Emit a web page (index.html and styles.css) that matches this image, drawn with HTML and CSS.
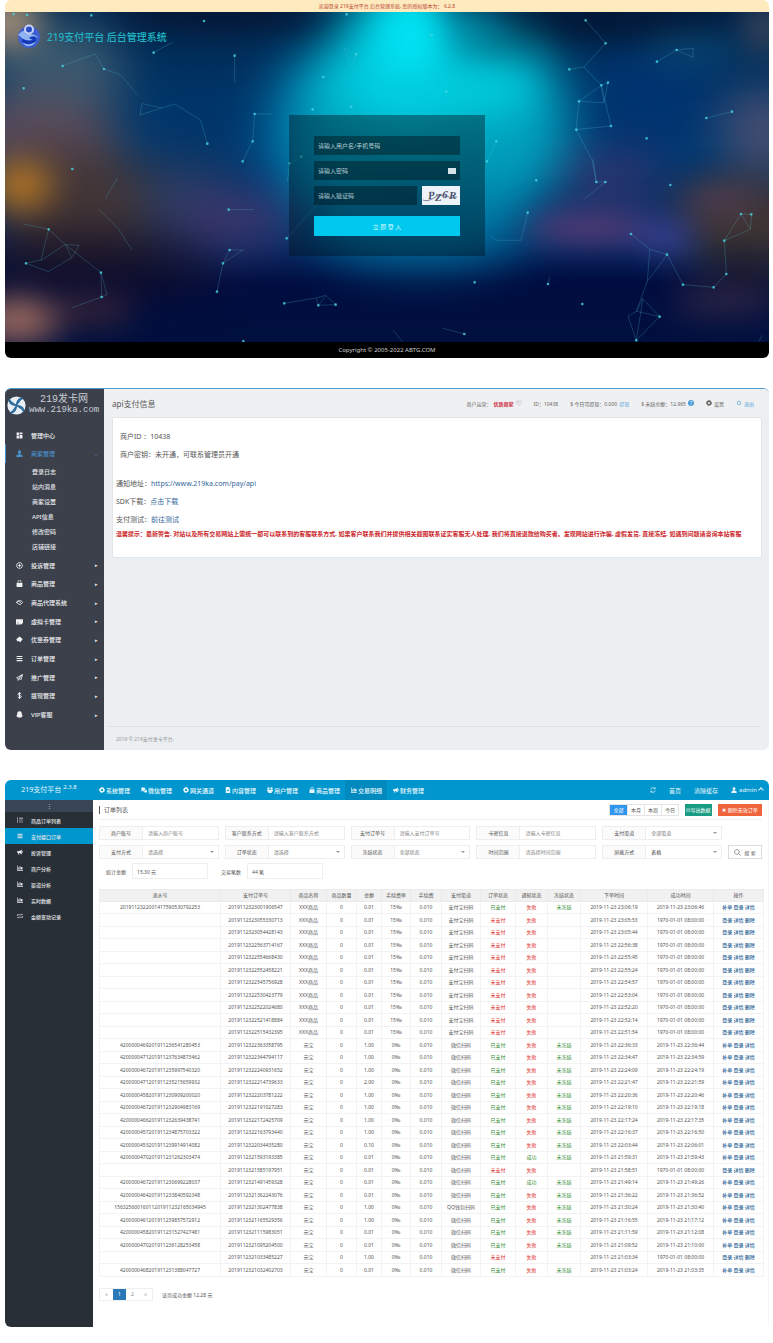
FILE: index.html
```html
<!DOCTYPE html>
<html lang="zh-CN">
<head>
<meta charset="utf-8">
<title>219支付平台</title>
<link rel="stylesheet" href="styles.css">
</head>
<body>
<svg class="sprite" aria-hidden="true">
  <symbol id="grid" viewBox="0 0 12 12"><path d="M1 1h4v5H1zM6 1h5v3H6zM1 7h4v4H1zM6 5h5v6H6z"/></symbol>
  <symbol id="user" viewBox="0 0 12 12"><circle cx="6" cy="3.4" r="2.8"/><path d="M4.7 5h2.6v2.2l4 1.8V12H.7V9l4-1.8z"/></symbol>
  <symbol id="globe" viewBox="0 0 12 12"><path fill="none" stroke="currentColor" stroke-width="1.4" d="M6 1a5 5 0 1 0 .01 0M3 6h6M6 3v6"/></symbol>
  <symbol id="bag" viewBox="0 0 12 12"><path d="M1 5h10v7H1z"/><path fill="none" stroke="currentColor" stroke-width="1.4" d="M3.5 6V3a2.5 2.5 0 0 1 5 0v3"/></symbol>
  <symbol id="eye" viewBox="0 0 12 12"><path fill="none" stroke="currentColor" stroke-width="1.4" d="M.7 6 3 3h6l2.3 3L7 10 .7 6l4-2 4 3"/></symbol>
  <symbol id="card" viewBox="0 0 12 12"><path d="M0 2h12v6L9 11H0zM2 8v1h3V8z" fill-rule="evenodd"/></symbol>
  <symbol id="tag" viewBox="0 0 12 12"><path d="m6 1 5.500 4-4 5.500-3-2-2 1-2-4z"/></symbol>
  <symbol id="list" viewBox="0 0 12 12"><path d="M1 1.500h10v2H1zM1 5h10v2H1zM1 8.500h10v2H1z"/></symbol>
  <symbol id="plane" viewBox="0 0 12 12"><path fill="none" stroke="currentColor" stroke-width="1.300" d="M11 1 1 6.500l2.500 1.300L11 1 9 9.500 5.500 8.300M3.500 7.800V11l2-2.500L11 1"/></symbol>
  <symbol id="dollar" viewBox="0 0 12 12"><path fill="none" stroke="currentColor" stroke-width="1.700" d="M9 3.500C8 2 3.500 1.500 3.500 4S9 5.500 9 8 4 10.500 3 8.500M6 0v12"/></symbol>
  <symbol id="bell" viewBox="0 0 12 12"><path d="M6 .5c3 0 4 2 4 5l1.500 3.500-1.500.5c0 1.500-2 2-4 2s-4-.5-4-2L.5 9 2 5.500c0-3 1-5 4-5"/></symbol>
  <symbol id="gear" viewBox="0 0 12 12"><path fill-rule="evenodd" d="M5 0h2l.4 1.600 1.500-.8L10.300 2.400l-.8 1.300L12 5v2l-1.800.4.8 1.500-1.500 1.500-1.500-.8L7 12H5l-.5-1.800-1.500.7L1.500 9.500l.7-1.500L0 7V5l1.800-.5L1 3l1.500-1.500 1.600.7zM6 3.800a2.200 2.200 0 1 0 .01 0"/></symbol>
  <symbol id="chat" viewBox="0 0 12 12"><ellipse cx="4.500" cy="4.200" rx="4.300" ry="3.600"/><path d="M1 10V6h3zM8.500 5.500c2 0 3.500 1 3.500 2.800 0 1-.5 1.700-1.200 2.200V12l-1.600-1C6 11.500 4.800 10 4.800 8.700 7 8.700 8.500 7.500 8.500 5.500"/></symbol>
  <symbol id="doc" viewBox="0 0 12 12"><path fill-rule="evenodd" d="M1.500 0H8l2.500 3v9h-9zM3.500 6l2 3L9 5.500 8 4.500 5.600 7 4.500 5.200z"/></symbol>
  <symbol id="users" viewBox="0 0 12 12"><circle cx="3" cy="3" r="2.300"/><circle cx="9" cy="3" r="2.300"/><path d="M0 5.500h12v3L9.500 9v3h-7V9L0 8.500z"/></symbol>
  <symbol id="chart" viewBox="0 0 12 12"><path d="M0 1h1.300v9H12v1.300H0zM2.500 5h2v4h-2zM5.200 2.500h2V9h-2zM8 4h3v5H8z"/></symbol>
  <symbol id="horn" viewBox="0 0 12 12"><path d="M9.500 1v10L5 8H4l.8 3.500H3L2.200 8H.5V4H5zM10.500 4l1.500 1v2l-1.500 1z"/></symbol>
  <symbol id="olist" viewBox="0 0 12 12"><path d="M4 1.500h8v1.300H4zM4 5.400h8v1.300H4zM4 9.300h8v1.300H4zM.5 1h1.500v2.600H.5zM.5 4.800H2v2.600H.5zM.5 8.600H2v2.600H.5z"/></symbol>
  <symbol id="swap" viewBox="0 0 12 12"><path fill="none" stroke="currentColor" stroke-width="1.300" d="M0 3.500h11L9 1.500M12 8.500H1l2 2M1 3.500v2M11 6.500v2"/></symbol>
  <symbol id="refresh" viewBox="0 0 12 12"><path fill="none" stroke="currentColor" stroke-width="1.500" d="M1.500 5A4.500 4.500 0 0 1 9.500 3M10.500 7a4.500 4.500 0 0 1-8 2M10.300.5v3H7M1.700 11.500v-3H5"/></symbol>
  <symbol id="glass" viewBox="0 0 12 12"><path fill="none" stroke="currentColor" d="M5 1a4 4 0 1 0 .01 0M8 8l3.500 3.500"/></symbol>
  <symbol id="cup" viewBox="0 0 12 12"><path fill="none" stroke="currentColor" d="M1 2h10v4L8 10H4L1 6zM4 2v3h4"/></symbol>
  <symbol id="ring" viewBox="0 0 12 12"><circle cx="6" cy="6" r="3.500" fill="none" stroke="currentColor" stroke-width="1.500"/></symbol>
</svg>

<main class="shots">
<section class="shot login">
  <p class="notice">欢迎登录 219支付平台 后台管理系统, 您的授权版本为： 6.2.8</p>
  <div class="stage">
    <svg class="scene" viewBox="5 12 764 330" preserveAspectRatio="none" aria-hidden="true">
      <defs>
        <filter id="b1" x="-100%" y="-100%" width="300%" height="300%" color-interpolation-filters="sRGB"><feGaussianBlur stdDeviation="16"/></filter>
        <filter id="b2" x="-100%" y="-100%" width="300%" height="300%" color-interpolation-filters="sRGB"><feGaussianBlur stdDeviation="24"/></filter>
        <linearGradient id="sky" x1="0" y1="0" x2="0" y2="1"><stop offset="0" stop-color="#02284f"/><stop offset=".4" stop-color="#003c74"/><stop offset=".7" stop-color="#022660"/><stop offset=".82" stop-color="#010d40"/><stop offset="1" stop-color="#00103e"/></linearGradient>
      </defs>
      <rect x="5" y="12" width="764" height="330" fill="url(#sky)"/>
      <g filter="url(#b2)">
        <ellipse cx="60" cy="70" rx="65" ry="50" fill="#3a5a70"/>
        <ellipse cx="35" cy="135" rx="85" ry="40" fill="#5a4a58"/>
        <ellipse cx="80" cy="200" rx="95" ry="50" fill="#433636"/>
        <ellipse cx="90" cy="265" rx="130" ry="28" fill="#120e26"/>
        <ellipse cx="185" cy="200" rx="45" ry="40" fill="#2a3c60"/>
        <ellipse cx="235" cy="220" rx="60" ry="28" fill="#41386e"/>
        <ellipse cx="200" cy="130" rx="55" ry="30" fill="#003468"/>
        <ellipse cx="320" cy="130" rx="55" ry="80" fill="#006aa0"/>
        <ellipse cx="430" cy="125" rx="140" ry="110" fill="#009cba"/>
        <ellipse cx="430" cy="80" rx="125" ry="55" fill="#00bcd0"/>
        <ellipse cx="400" cy="55" rx="60" ry="75" fill="#00d0e2"/>
        <ellipse cx="420" cy="225" rx="110" ry="40" fill="#0074a0"/>
        <ellipse cx="650" cy="100" rx="65" ry="60" fill="#003470"/>
        <ellipse cx="765" cy="130" rx="45" ry="40" fill="#4a4f70"/>
        <ellipse cx="750" cy="225" rx="75" ry="45" fill="#40342f"/>
        <ellipse cx="610" cy="178" rx="55" ry="20" fill="#40356e"/>
      </g>
      <g filter="url(#b1)">
        <ellipse cx="8" cy="22" rx="34" ry="28" fill="#a08c76"/>
        <ellipse cx="215" cy="12" rx="100" ry="16" fill="#061330"/>
        <ellipse cx="500" cy="42" rx="50" ry="14" fill="#007a92"/>
        <ellipse cx="410" cy="40" rx="24" ry="50" fill="#00e4f4"/>
        <ellipse cx="450" cy="88" rx="75" ry="18" fill="#00cadb"/>
        <ellipse cx="620" cy="18" rx="120" ry="20" fill="#021634"/>
        <ellipse cx="22" cy="185" rx="30" ry="24" fill="#b07424"/>
        <ellipse cx="18" cy="320" rx="42" ry="22" fill="#a06c5e"/>
        <ellipse cx="90" cy="310" rx="45" ry="12" fill="#442a38"/>
        <ellipse cx="590" cy="228" rx="65" ry="14" fill="#68407a"/>
        <ellipse cx="665" cy="237" rx="28" ry="15" fill="#40449c"/>
        <ellipse cx="720" cy="200" rx="40" ry="14" fill="#553e50"/>
        <ellipse cx="745" cy="265" rx="35" ry="8" fill="#15101e"/>
        <ellipse cx="725" cy="302" rx="55" ry="10" fill="#403048"/>
        <ellipse cx="764" cy="28" rx="18" ry="24" fill="#454a5a"/>
        <ellipse cx="690" cy="48" rx="45" ry="14" fill="#0a4a78"/>
      </g>
      <g transform="scale(.3333)">
        <path class="web" d="M461 157l56-30M704 167v80M188 197l98-35 26 45 50 17 50 60M1030 142l39 21-14 35zM420 345l6-34 60 13 38-12 78 48 20 71M420 345l66-21M764 342h52M764 342l-6 82-30 60M869 490l35-20M869 490l-7 55M353 533l-38 65M295 626l60 60 40 63M70 672l76 16-23 92-45 10 67 25 70-42 23-37-44-2-71 48M146 688l50 46 19 38M196 734l107 84M303 818l2 73 16-7zM305 891l-90 33M686 629h75M669 790l20-40h40l-60 40-18 85M853 910l96-16 28-8 30 28-52 2-6-22M955 916l22-28M860 715l97-108"/>
        <path class="dot" d="M41 42h0M81 45h0M274 46h0M612 63h0M188 198h0M71 265h0M461 158h0M312 207h0M704 167h0M970 231h0M1069 163h0M1040 43h0M1054 320h0M938 328h0M764 342h0M758 424h0M728 484h0M622 431h0M217 507h0M869 490h0M904 470h0M686 629h0M860 715h0M146 688h0M78 790h0M303 818h0M305 891h0M689 750h0M669 790h0M651 875h0M853 910h0M955 916h0M1007 914h0M730 1024h0"/>
      </g>
      <g transform="translate(383) scale(.3333)">
        <path class="web" d="M608 61l60 69-65 71-44 7M603 201l52 55 20-8-12 60-75-4-9 85 48 90 13 67h28l-63 50M655 256l29 122M588 304l67-48 8 52M640 546l-10-68M580 389l104-11M822 185l59-35 50-5-2 27-48-22M970 354l77-19M340 424l-28 60M434 638l-20 83h-75l-15-13M500 830l-5 22M744 702l57 46 52 16-60 80-33 90-25 15 25 72 70-71-51-54-18 38 70 16M801 748l-8 96M853 764l47 90 92 8 38-40-6-100 78-34 4-44-32-2 28 46M1074 642l-50 80M780 896l-20 125M180 985l64 17M30 990l28 35M1127 1025l12-20"/>
        <path class="dot" d="M608 61h0M668 130h0M559 208h0M655 256h0M675 248h0M588 304h0M580 389h0M684 378h0M881 150h0M822 185h0M791 415h0M970 354h0M1047 335h0M862 555h0M640 546h0M667 546h0M340 424h0M312 484h0M460 541h0M434 638h0M190 275h0M146 105h0M744 702h0M900 854h0M1030 822h0M992 862h0M1024 722h0M1074 642h0M1105 643h0M760 1021h0M830 950h0M275 847h0M244 1002h0M598 912h0M495 852h0M852 764h0"/>
      </g>
    </svg>
    <header class="brand">
      <svg class="ball" viewBox="0 0 24 24" aria-hidden="true"><circle cx="12" cy="13" r="11" fill="#3f5fd0"/><circle cx="12" cy="16" r="7" fill="#1237b4"/><path d="M1 11c3-4 6-5 10-4l-3 3c5-1 10 0 14 4-4-2-8-2-10 0l4 2c-5 1-10 0-12-3M5 18c4 3 10 3 14-1-2 6-10 8-14 1" fill="#8fb4f4"/><circle cx="12" cy="5.500" r="4" fill="#2c4ec4" stroke="#c8d4f8" stroke-width="2"/></svg>
      <h1>219支付平台 后台管理系统</h1>
    </header>
    <form class="panel">
      <input class="field" type="text" aria-label="用户名" placeholder="请输入用户名/手机号码">
      <div class="secret"><input class="field" type="password" aria-label="密码" placeholder="请输入密码"><i class="key"></i></div>
      <div class="verify">
        <input class="field" type="text" aria-label="验证码" placeholder="请输入验证码">
        <svg class="captcha" viewBox="0 0 38 19" role="img" aria-label="验证码图片"><rect width="38" height="19" fill="#eef3fa"/><g class="scrawl"><text x="6" y="13" transform="rotate(-6 8 10)">P</text><text x="13" y="15">Z</text><text x="20" y="12" transform="rotate(8 22 10)">6</text><text x="27" y="13">R</text></g><path d="M1 14c5 2 9-1 14-4s10 3 20 1" fill="none" stroke="#59607c" stroke-width=".8"/></svg>
      </div>
      <button class="enter" type="button">立 即 登 入</button>
    </form>
  </div>
  <footer class="legal">Copyright © 2005-2022 ABTG.COM</footer>
</section>

<section class="shot merchant">
  <aside class="mside">
    <div class="mlogo">
      <svg viewBox="0 0 24 24" aria-hidden="true"><circle cx="12" cy="12" r="11.500" fill="#e8eef4"/><path d="M12 12C5 12 2 8 3 4c1 4 5 5 9 8C12 5 16 2 20 3c-4 1-5 5-8 9 7 0 10 4 9 8-1-4-5-5-9-8 0 7-4 10-8 9 4-1 5-5 8-9" fill="#2d6d9e" stroke="#2d6d9e" stroke-width="1.500"/></svg>
      <div><b>219发卡网</b><span>www.219ka.com</span></div>
    </div>
    <nav class="mnav">
      <a href="#"><svg><use href="#grid"/></svg>管理中心</a>
      <a href="#" class="on"><svg><use href="#user"/></svg>商家管理<i>⌄</i></a>
      <div class="sub"><a href="#">登录日志</a><a href="#">站内消息</a><a href="#">商家设置</a><a href="#">API信息</a><a href="#">修改密码</a><a href="#">店铺链接</a></div>
      <a href="#"><svg><use href="#globe"/></svg>投诉管理<i>▸</i></a>
      <a href="#"><svg><use href="#bag"/></svg>商品管理<i>▸</i></a>
      <a href="#"><svg><use href="#eye"/></svg>商品代理系统<i>▸</i></a>
      <a href="#"><svg><use href="#card"/></svg>虚拟卡管理<i>▸</i></a>
      <a href="#"><svg><use href="#tag"/></svg>优惠券管理<i>▸</i></a>
      <a href="#"><svg><use href="#list"/></svg>订单管理<i>▸</i></a>
      <a href="#"><svg><use href="#plane"/></svg>推广管理<i>▸</i></a>
      <a href="#"><svg><use href="#dollar"/></svg>提现管理<i>▸</i></a>
      <a href="#"><svg><use href="#bell"/></svg>VIP客服<i>▸</i></a>
    </nav>
  </aside>
  <div class="mmain">
    <header class="mtop">
      <h2>api支付信息</h2>
      <div class="facts">
        <span>商户运营： <b>优质商家</b> <svg class="pale"><use href="#cup"/></svg></span>
        <span>ID：10438</span>
        <span>$ 今日可提现：0.000 <a href="#">提现</a></span>
        <span>$ 未结余额：12.965<i class="tip">?</i></span>
        <span><svg><use href="#gear"/></svg> 设置</span>
        <a href="#"><svg><use href="#ring"/></svg> 退出</a>
      </div>
    </header>
    <article class="mcard">
      <p class="in">商户ID ：10438</p>
      <p class="in last">商户密钥：未开通，可联系管理员开通</p>
      <p>通知地址：<a href="#">https://www.219ka.com/pay/api</a></p>
      <p>SDK下载：<a href="#">点击下载</a></p>
      <p>支付测试：<a href="#">前往测试</a></p>
      <p class="warn">温馨提示：最新警告, 对站以及所有交易网站上需统一都可以联系到的客服联系方式, 如果客户联系我们并提供相关截图联系证实客服无人处理, 我们将直接退款给购买者。发现网站进行诈骗, 虚假发货, 直接冻结, 如遇到问题请咨询本站客服</p>
    </article>
    <footer class="mfoot">2019 © 219支付发卡平台.</footer>
  </div>
</section>

<section class="shot orders">
  <header class="otop">
    <strong>219支付平台 <sup>2.3.8</sup></strong>
    <nav>
      <a href="#"><svg><use href="#gear"/></svg>系统管理</a>
      <a href="#"><svg><use href="#chat"/></svg>微信管理</a>
      <a href="#"><svg><use href="#gear"/></svg>网关通道</a>
      <a href="#"><svg><use href="#doc"/></svg>内容管理</a>
      <a href="#"><svg><use href="#users"/></svg>用户管理</a>
      <a href="#"><svg><use href="#bag"/></svg>商品管理</a>
      <a href="#" class="on"><svg><use href="#chart"/></svg>交易明细</a>
      <a href="#"><svg><use href="#horn"/></svg>财务管理</a>
    </nav>
    <div class="acct">
      <svg><use href="#refresh"/></svg>
      <a href="#">首页</a><a href="#">清除缓存</a>
      <span><svg><use href="#user"/></svg>admin <i class="caret"></i></span>
    </div>
  </header>
  <div class="obody">
    <aside class="oside">
      <div class="fold">⋮</div>
      <a href="#"><svg><use href="#olist"/></svg>商品订单列表</a>
      <a href="#" class="on"><svg><use href="#list"/></svg>支付接口订单</a>
      <a href="#"><svg><use href="#horn"/></svg>投诉管理</a>
      <a href="#"><svg><use href="#chart"/></svg>商户分析</a>
      <a href="#"><svg><use href="#chart"/></svg>渠道分析</a>
      <a href="#"><svg><use href="#chart"/></svg>实时数据</a>
      <a href="#"><svg><use href="#swap"/></svg>金额变动记录</a>
    </aside>
    <div class="omain">
      <div class="bar">
        <h2>订单列表</h2>
        <div class="range"><button class="on">全部</button><button>本月</button><button>本周</button><button>今日</button></div>
        <button class="green">⊡导出数据</button>
        <button class="red">✖ 删除无效订单</button>
      </div>
      <form class="filters">
        <label class="f"><span>商户账号</span><input placeholder="请输入商户账号"></label>
        <label class="f"><span>客户联系方式</span><input placeholder="请输入客户联系方式"></label>
        <label class="f"><span>支付订单号</span><input placeholder="请输入支付订单号"></label>
        <label class="f"><span>卡密信息</span><input placeholder="请输入卡密信息"></label>
        <label class="f s"><span>支付渠道</span><select><option>全部渠道</option></select></label>
        <span></span>
        <label class="f s"><span>支付方式</span><select><option>请选择</option></select></label>
        <label class="f s"><span>订单状态</span><select><option>请选择</option></select></label>
        <label class="f s"><span>冻结状态</span><select><option>全部状态</option></select></label>
        <label class="f"><span>时间范围</span><input placeholder="请选择时间范围"></label>
        <label class="f s dark"><span>屏蔽方式</span><select><option>表格</option></select></label>
        <button class="find" type="button"><svg><use href="#glass"/></svg>搜 索</button>
      </form>
      <div class="totals">
        <label>统计金额<input value="15.30 元" readonly></label>
        <label>交易笔数<input value="44 笔" readonly></label>
      </div>
      <table class="grid">
        <colgroup><col class="w121"><col class="w70"><col class="w36"><col class="w30"><col class="w25"><col class="w29"><col class="w31"><col class="w39"><col class="w35"><col class="w32"><col class="w33"><col class="w67"><col class="w66"><col class="w50"></colgroup>
        <thead><tr><th>流水号</th><th>支付订单号</th><th>商品名称</th><th>商品数量</th><th>金额</th><th>手续费率</th><th>手续费</th><th>支付渠道</th><th>订单状态</th><th>通知状态</th><th>冻结状态</th><th>下单时间</th><th>成功时间</th><th>操作</th></tr></thead>
        <tbody id="rows"></tbody>
      </table>
      <div class="pager">
        <div class="pages"><a href="#">«</a><a href="#" class="on">1</a><a href="#">2</a><a href="#">»</a></div>
        <span>该页成功金额 12.28 元</span>
      </div>
    </div>
  </div>
</section>
</main>
<script src="orders.js"></script>
</body>
</html>
```
FILE: styles.css
```css
* { box-sizing: border-box; }
body { margin: 0; background: #fff; font-family: "Noto Sans", "Noto Sans CJK SC", sans-serif; font-size: 5px; color: #555; }
h1, h2, p { margin: 0; font-weight: 400; }
a { color: inherit; text-decoration: none; }
i { font-style: normal; }
input, select, button { font: inherit; color: inherit; margin: 0; padding: 0; border: 0; background: none; border-radius: 0; min-width: 0; appearance: none; }
svg { fill: currentColor; }
.sprite { position: absolute; width: 0; height: 0; }
.shots { padding: 0 4px 16px 5px; display: flex; flex-direction: column; gap: 30px; }
.shot { border-radius: 6px; overflow: hidden; }

/* login */
.notice { height: 12px; line-height: 12px; text-align: center; background: #feeabf; color: #b8452f; }
.stage { position: relative; height: 330px; }
.scene { position: absolute; inset: 0; width: 100%; height: 100%; }
.web { fill: none; stroke: #58c8d8; stroke-width: 2; opacity: .35; }
.dot { fill: none; stroke: #46d4e4; stroke-width: 8; stroke-linecap: round; opacity: .8; }
.brand { position: relative; display: flex; align-items: center; gap: 6px; padding: 12px 12px 0; height: 36px; }
.ball { width: 24px; height: 24px; }
.brand h1 { font-size: 10px; font-weight: 500; color: #20b4c4; }
.panel { position: relative; width: 196px; margin: 67px auto 0; padding: 21px 25px 20px; background: rgba(0, 20, 30, .42); display: flex; flex-direction: column; gap: 6px; }
.field { width: 100%; height: 19px; padding: 0 4px; background: rgba(0, 20, 28, .45); color: #cde; font-size: 6px; }
.field::placeholder { color: #b4ccd2; opacity: 1; }
.secret { display: flex; align-items: center; background: rgba(0, 20, 28, .45); padding-right: 4px; }
.secret .field { background: none; }
.key { flex: none; width: 8px; height: 6px; background: #d5e2ea; }
.verify { display: flex; gap: 5px; }
.captcha { flex: none; width: 38px; height: 19px; }
.scrawl { font: italic 700 11px "Liberation Serif", serif; fill: #4d5470; }
.enter { margin-top: 5px; height: 20px; background: #00c8ee; color: #d8faff; font-size: 6px; }
.legal { height: 16px; line-height: 16px; text-align: center; background: #000; color: #ccc; font-size: 6px; }

/* merchant */
.merchant { display: grid; grid-template-columns: 99px 1fr; min-height: 362px; background: #ebeff2; border-top: 1px solid #4c9ccc; }
.mside { background: #3b404b; color: #e4e6ea; font-size: 6px; }
.mlogo { display: flex; align-items: center; gap: 3px; height: 32px; padding: 0 2px; line-height: 10px; font-family: "Liberation Mono", "Noto Sans CJK SC", monospace; }
.mlogo svg { width: 19px; height: 19px; flex: none; }
.mlogo div { display: flex; flex-direction: column; align-items: center; color: #c9ced6; }
.mlogo b { font-weight: 400; font-size: 10px; }
.mlogo span { font-size: 9px; }
.mnav { padding-top: 5px; }
.mnav > a { display: flex; align-items: center; height: 19px; padding-left: 11px; color: #f0f1f3; font-weight: 500; }
.mnav > a:nth-child(3n+1) { height: 18px; }
.mnav > a svg { width: 7px; height: 7px; margin-right: 8px; }
.mnav > a i { margin: 0 6px 0 auto; font-size: 5px; }
.mnav > a.on { color: #4a90c8; border-left: 1px solid #4a90c8; padding-left: 10px; }
.sub { display: flex; flex-direction: column; padding: 2px 0 1px; }
.sub a { height: 15px; line-height: 15px; padding-left: 27px; font-size: 6px; font-weight: 500; }
.mmain { display: flex; flex-direction: column; min-width: 0; }
.mtop { display: flex; align-items: center; justify-content: space-between; height: 28px; padding: 0 15px 0 8px; background: #eff0f1; }
.mtop h2 { font-size: 8px; color: #555; }
.facts { display: flex; gap: 12px; color: #666; white-space: nowrap; }
.facts span, .facts > a { display: flex; align-items: center; gap: 2px; }
.facts svg { width: 6px; height: 6px; }
.facts b { color: #cc2a3a; }
.facts a { color: #62a8dc; }
.pale { color: #bbb; }
.tip { width: 6px; height: 6px; line-height: 6px; border-radius: 3px; background: #4a9bd8; color: #fff; text-align: center; }
.mcard { margin: 0 7px 0 8px; padding: 10px 4px 17px 3px; min-height: 141px; background: #fff; border: 1px solid #e2e5e8; border-radius: 2px; font-size: 7px; line-height: 18px; }
.mcard a { color: #33679a; }
.mcard .in { padding-left: 4px; }
.mcard .last { margin-bottom: 11px; }
.mcard .warn { font-size: 6px; line-height: 10px; font-weight: 700; color: #cc1f2a; }
.mfoot { margin: auto 8px 0 4px; height: 24px; line-height: 24px; padding-left: 8px; border-top: 1px solid #dde1e4; color: #999; }

/* orders */
.otop { display: flex; align-items: center; height: 20px; background: #0296ce; color: #e6f6fc; }
.otop svg, .oside svg { width: 6px; height: 6px; flex: none; }
.otop strong { width: 88px; text-align: center; font-size: 7px; font-weight: 400; line-height: 20px; }
.otop sup { font-size: 6px; line-height: 6px; }
.otop nav { display: grid; grid-template-columns: repeat(8, 42px); font-size: 6px; font-weight: 500; }
.otop nav a { display: flex; align-items: center; gap: 1px; height: 20px; padding-left: 6px; white-space: nowrap; }
.otop nav .on { background: #0289be; }
.acct { display: flex; align-items: center; gap: 13px; margin-left: auto; padding-right: 6px; }
.acct a { font-size: 6px; }
.acct span { display: flex; align-items: center; gap: 2px; font-size: 6px; }
.caret { width: 4px; height: 4px; border: solid #e6f6fc; border-width: 1px 0 0 1px; transform: rotate(45deg); }
.obody { display: grid; grid-template-columns: 88px 1fr; }
.oside { background: #282f36; color: #e4e6e8; font-weight: 500; }
.fold { height: 12px; line-height: 12px; text-align: center; background: #394555; }
.oside a { display: flex; align-items: center; gap: 8px; height: 16px; padding-left: 12px; }
.oside a.on { background: #0296ce; }
.omain { min-width: 0; padding: 0 6px 26px; border-right: 1px solid #f6f6f6; }
.bar { display: flex; align-items: center; height: 20px; border-bottom: 1px solid #f0f0f0; line-height: 10px; }
.bar h2 { margin-right: auto; padding-left: 4px; border-left: 1px solid #555; font-size: 6px; line-height: 8px; }
.range { display: flex; margin-right: 6px; border: 1px solid #e4e4e4; }
.range button { width: 17px; height: 10px; border-left: 1px solid #e4e4e4; }
.range button.on { background: #2f96ee; color: #fff; border: 0; }
.green { width: 27px; height: 12px; background: #1a9c84; color: #fff; margin-right: 6px; }
.red { width: 44px; height: 12px; background: #f0643c; color: #fff; }
.filters { display: grid; grid-template-columns: repeat(5, 1fr) 34px; gap: 5px 6px; padding: 6px 0 4px; }
.f { position: relative; display: grid; grid-template-columns: 43px 1fr; height: 14px; border: 1px solid #eee; line-height: 12px; }
.f span { text-align: center; background: #fbfbfb; border-right: 1px solid #eee; }
.f input, .f select { width: 100%; padding: 0 5px; color: #777; }
.f input::placeholder { color: #888; opacity: 1; }
.f.dark select { color: #333; }
.f.s::after { content: ""; position: absolute; right: 4px; top: 5px; border: 2px solid transparent; border-top-color: #999; }
.find { display: flex; align-items: center; justify-content: center; gap: 3px; border: 1px solid #ddd; }
.find svg { width: 7px; height: 7px; }
.totals { display: flex; gap: 13px; padding-left: 7px; }
.totals label { display: flex; align-items: center; gap: 6px; }
.totals input { width: 76px; height: 16px; padding: 0 4px; border: 1px solid #eee; }
.grid { width: 100%; margin-top: 10px; table-layout: fixed; border-collapse: collapse; line-height: 7px; border: 1px solid #eee; }
.w121 { width: 121px; } .w70 { width: 70px; } .w36 { width: 36px; } .w30 { width: 30px; } .w25 { width: 25px; }
.w29 { width: 29px; } .w31 { width: 31px; } .w39 { width: 39px; } .w35 { width: 35px; } .w32 { width: 32px; }
.w33 { width: 33px; } .w67 { width: 67px; } .w66 { width: 66px; } .w50 { width: 50px; }
.grid th, .grid td { padding: 0; text-align: center; font-weight: 400; white-space: nowrap; border: 1px solid #f3f3f3; }
.grid th { height: 12px; background: #f1f1f1; border-color: #ebebeb; }
.grid td { height: 12px; }
.grid tr:nth-child(even) td { height: 13px; }
.ok { color: #2f8a2f; }
.no { color: #dc2a2a; }
.grid a { color: #2a6496; font-weight: 500; }
.pager { display: flex; align-items: center; gap: 9px; margin-top: 11px; }
.pages { display: flex; border: 1px solid #eee; }
.pages a { width: 13px; height: 11px; line-height: 11px; text-align: center; color: #888; }
.pages .on { background: #2a78b8; color: #fff; }
```
FILE: orders.js
```js
// serial | order | amount | created | finished
const orders = `2019112322001417590530792253|2019112323001906547|0.01|23:06:19|23:06:46
|2019112323055330713|0.01|23:05:53|
|2019112323054428143|0.01|23:05:44|
|2019112322563714167|0.01|22:56:38|
|2019112322554668430|0.01|22:55:45|
|2019112322552458221|0.01|22:55:24|
|2019112322545756928|0.01|22:54:57|
|2019112322530423779|0.01|22:53:04|
|2019112322522024680|0.01|22:52:20|
|2019112322521418884|0.01|22:52:14|
|2019112322515432395|0.01|22:51:54|
4200000469201911236541280453|2019112322363358795|1.00|22:36:33|22:36:44
4200000471201911237634873462|2019112322344794117|1.00|22:34:47|22:34:59
4200000467201911235997540320|2019112322240931652|1.00|22:24:09|22:24:19
4200000471201911235215659932|2019112322214739633|2.00|22:21:47|22:21:59
4200000458201911230909200020|2019112322203781222|1.00|22:20:36|22:20:46
4200000467201911232904983169|2019112322191027283|1.00|22:19:10|22:19:18
4200000466201911232639438741|2019112322172425709|1.00|22:17:24|22:17:35
4200000457201911234875703322|2019112322163793440|1.00|22:16:37|22:16:50
4200000453201911239914914082|2019112322034435280|0.10|22:03:44|22:06:01
4200000470201911231262303474|2019112321593193385|0.01|21:59:31|21:59:43
|2019112321585197951|0.01|21:58:51|
4200000467201911230699228037|2019112321491459328|0.01|21:49:14|21:49:26
4200000464201911233840592348|2019112321362243076|0.01|21:36:22|21:36:52
15632560016011201911232165034945|2019112321302477838|1.00|21:30:24|21:30:40
4200000461201911239857572912|2019112321165529356|1.00|21:16:55|21:17:12
4200000458201911231527427481|2019112321115983051|0.01|21:11:59|21:12:08
4200000470201911236128253458|2019112321095204500|0.01|21:09:52|21:10:00
|2019112321033485227|1.00|21:03:34|
4200000468201911231388047727|2019112321032402703|0.01|21:03:24|21:03:35`.split("\n");

const links = names => names.map(n => `<a href="#">${n}</a>`).join(" ");
document.getElementById("rows").innerHTML = orders.map((line, i) => {
  const [serial, order, amount, created, finished] = line.split("|");
  const goods = i < 11;
  const notified = i === 20 || i === 22;
  const channel = goods ? "支付宝扫码" : i === 24 ? "QQ钱包扫码" : "微信扫码";
  return `<tr><td>${serial}</td><td>${order}</td><td>${goods ? "XXX商品" : "元宝"}</td><td>0</td><td>${amount}</td>
    <td>${goods ? "15‰" : "0‰"}</td><td>0.010</td><td>${channel}</td>
    <td class="${finished ? "ok" : "no"}">${finished ? "已支付" : "未支付"}</td>
    <td class="${notified ? "ok" : "no"}">${notified ? "成功" : "失败"}</td>
    <td class="ok">${finished ? "未冻结" : ""}</td>
    <td>2019-11-23 ${created}</td><td>${finished ? "2019-11-23 " + finished : "1970-01-01 08:00:00"}</td>
    <td>${links(finished ? ["补单", "登录", "详情"] : ["登录", "详情", "删除"])}</td></tr>`;
}).join("");
```
